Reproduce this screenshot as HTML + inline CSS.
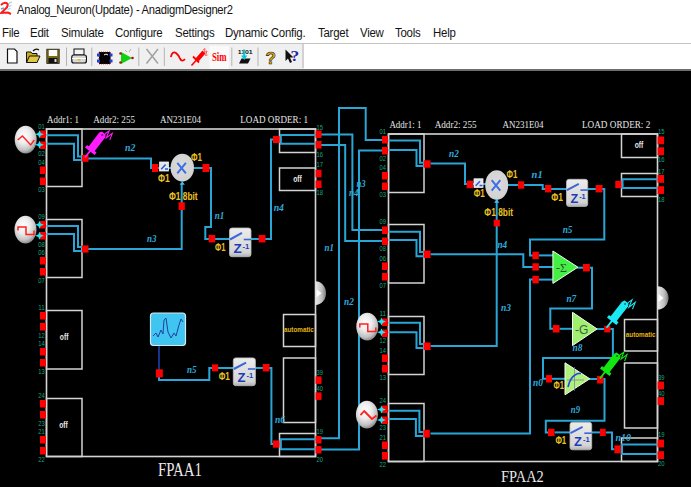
<!DOCTYPE html>
<html><head><meta charset="utf-8"><style>
html,body{margin:0;padding:0;width:691px;height:487px;overflow:hidden;background:#000;}
#top{position:absolute;left:0;top:0;width:691px;height:71px;background:#fff;}
#title{position:absolute;left:0;top:0;width:691px;height:22px;}
.tt{position:absolute;left:16.8px;top:2.3px;font-family:"Liberation Sans",sans-serif;font-size:13px;color:#141414;letter-spacing:-0.3px;white-space:nowrap;transform:scaleX(0.862);transform-origin:0 0;}
#menu{position:absolute;left:0;top:22px;width:691px;height:20px;}
#menu span{position:absolute;top:3.6px;font-family:"Liberation Sans",sans-serif;font-size:12.3px;color:#141414;white-space:nowrap;letter-spacing:-0.25px;transform:scaleX(0.93);transform-origin:0 0;}
#sep{position:absolute;left:0;top:42.5px;width:691px;height:1px;background:#c4c4c4;}
#tb{position:absolute;left:0;top:43px;width:304px;height:26px;background:#f0f0f0;}
#tbl{position:absolute;left:0;top:68.8px;width:691px;height:2.2px;background:#6e6e6e;}
</style></head><body>
<div id="top">
<div id="title"><span class="ico"></span><span class="tt">Analog_Neuron(Update) - AnadigmDesigner2</span></div>
<div id="menu">
<span style="left:2px">File</span><span style="left:30px">Edit</span><span style="left:61px">Simulate</span><span style="left:115px">Configure</span><span style="left:175px">Settings</span><span style="left:225px">Dynamic Config.</span><span style="left:317.5px">Target</span><span style="left:360px">View</span><span style="left:395px">Tools</span><span style="left:432.5px">Help</span>
</div>
<div id="tb"></div>
<div id="sep"></div><div id="tbl"></div><svg width="691" height="71" style="position:absolute;left:0;top:0">
<!-- title icon -->
<path d="M1,5 Q4.5,1.2 7.5,3.8 Q8.5,6.5 5,9.2 L1.2,13 L8,12.6 L11,14" fill="none" stroke="#ff1a1a" stroke-width="2"/>
<path d="M8.5,3.5 L12,2 M8.5,6.5 L11.5,5.5 M7.5,9.5 L10.5,8.5" stroke="#70c8e8" stroke-width="0.9"/>
<path d="M1,9 L4,8" stroke="#50b0d0" stroke-width="1.5"/>
<!-- separators -->
<g stroke="#b4b4b4" stroke-width="1">
<line x1="66.5" y1="47.5" x2="66.5" y2="66"/><line x1="91.8" y1="47.5" x2="91.8" y2="66"/>
<line x1="138.8" y1="47.5" x2="138.8" y2="66"/><line x1="164.3" y1="47.5" x2="164.3" y2="66"/>
<line x1="231.8" y1="47.5" x2="231.8" y2="66"/><line x1="258" y1="47.5" x2="258" y2="66"/>
<line x1="303" y1="44" x2="303" y2="68"/>
</g>
<!-- new doc -->
<path d="M7.5,49 L14.5,49 L17,51.5 L17,63 L7.5,63 Z" fill="#fff" stroke="#111" stroke-width="1.2"/>
<!-- open -->
<path d="M26.5,52 L31,52 L32,53.5 L37,53.5 L37,62.5 L26.5,62.5 Z" fill="#c8b020" stroke="#111" stroke-width="1"/>
<path d="M26.5,62.5 L29.5,56 L40,56 L37,62.5 Z" fill="#e0c840" stroke="#111" stroke-width="1"/>
<path d="M33,51 Q36,48 39,50" fill="none" stroke="#111" stroke-width="1.2"/>
<!-- save -->
<rect x="46.8" y="49.2" width="12.4" height="14.3" fill="#7a6a10" stroke="#222" stroke-width="0.8"/>
<rect x="48.8" y="50" width="8.4" height="6" fill="#fff"/>
<rect x="48.5" y="58" width="9" height="5" fill="#111"/>
<rect x="54.5" y="59" width="2" height="3" fill="#ddd"/>
<!-- printer -->
<rect x="74" y="49" width="10" height="6" fill="#f4f4f4" stroke="#111" stroke-width="1"/>
<rect x="71.8" y="55" width="14.6" height="8" rx="2" fill="#d8d8d8" stroke="#111" stroke-width="1.2"/>
<line x1="72" y1="58.5" x2="86" y2="58.5" stroke="#fff" stroke-width="1"/>
<rect x="77.5" y="59" width="3" height="1.5" fill="#e0c000"/>
<!-- chip -->
<rect x="99" y="52" width="11.5" height="12" fill="#000" stroke="#c01010" stroke-width="0.7" stroke-dasharray="1,1"/>
<rect x="97" y="53.5" width="3" height="3" fill="#2040d0"/><rect x="97" y="59.5" width="3" height="3" fill="#2040d0"/>
<rect x="109.5" y="53.5" width="3" height="3" fill="#2040d0"/><rect x="109.5" y="59.5" width="3" height="3" fill="#2040d0"/>
<path d="M104,55 Q106,53 108,55" fill="none" stroke="#fff" stroke-width="1"/>
<!-- green tri -->
<polygon points="121,52 132,58 121,64" fill="#10d010"/>
<circle cx="120.5" cy="53.5" r="1.3" fill="#b01010"/><circle cx="120.5" cy="62.5" r="1.3" fill="#b01010"/><circle cx="132.5" cy="58" r="1.3" fill="#b01010"/>
<path d="M125,50 L127,52 M131,49 L129,52" stroke="#888" stroke-width="0.6"/>
<!-- X -->
<path d="M146.5,49 L158,63.5 M158,49 L146.5,63.5" stroke="#a0a0a0" stroke-width="1.5"/>
<!-- sine -->
<path d="M170.8,57 Q172.5,50.5 176,53 Q178.5,55 180,58.5 Q182,62.5 185,59" fill="none" stroke="#f00" stroke-width="1.8"/>
<!-- red probe -->
<path d="M191.5,65.5 L197,59.5" stroke="#f00" stroke-width="1.6"/>
<polygon points="195.5,58.5 202.5,50.5 205.5,53.5 198.5,61.5" fill="#f00"/>
<path d="M193,56.5 L199,62.5" stroke="#f00" stroke-width="1.8"/>
<path d="M203,50 L205,48.5 L204.5,52.5 L207,51 L205.5,55.5 L207.5,55" fill="none" stroke="#f44" stroke-width="0.9"/>
<!-- Sim button -->
<rect x="209.5" y="46" width="19.5" height="23" fill="#fafafa"/>
<text x="212" y="60.5" font-family="Liberation Serif" font-size="11.5" font-weight="bold" fill="#f00" textLength="14.6" lengthAdjust="spacingAndGlyphs">Sim</text>
<!-- download -->
<text x="237.7" y="53.8" font-family="Liberation Sans" font-size="5.5" font-weight="bold" fill="#111" textLength="15" lengthAdjust="spacingAndGlyphs">1101</text>
<path d="M239,63.5 L241.5,58.5 L250.5,58.5 L248,63.5 Z" fill="#111"/>
<rect x="243.2" y="49.5" width="2" height="7" fill="#00c8e0"/>
<polygon points="241,55.5 247.4,55.5 244.2,60" fill="#00c8e0"/>
<!-- yellow ? -->
<text x="265.5" y="63.5" font-family="Liberation Sans" font-size="17" font-weight="bold" fill="#e8b000" stroke="#222" stroke-width="0.6" textLength="10.5" lengthAdjust="spacingAndGlyphs">?</text>
<!-- pointer ? -->
<path d="M285.5,49.5 L285.5,61 L288,58.5 L290,63 L292,62 L290,57.5 L293.5,57.5 Z" fill="#111"/>
<text x="290.5" y="61" font-family="Liberation Serif" font-size="15" font-weight="bold" fill="#1a2aa0" textLength="8.7" lengthAdjust="spacingAndGlyphs">?</text>
</svg>
</div>
<svg width="691" height="416" viewBox="0 71 691 416" style="position:absolute;left:0;top:71px"><defs>
<radialGradient id="sph" cx="0.42" cy="0.36" r="0.72">
<stop offset="0" stop-color="#ffffff"/><stop offset="0.4" stop-color="#ececec"/><stop offset="0.72" stop-color="#c2c2c2"/><stop offset="1" stop-color="#6c6c6c"/></radialGradient>
<radialGradient id="mul" cx="0.5" cy="0.45" r="0.6">
<stop offset="0" stop-color="#dcdcdc"/><stop offset="0.85" stop-color="#d2d2d2"/><stop offset="1" stop-color="#b4b4b4"/></radialGradient>
<linearGradient id="zg" x1="0" y1="0" x2="0" y2="1">
<stop offset="0" stop-color="#ececec"/><stop offset="0.85" stop-color="#d4d4d4"/><stop offset="1" stop-color="#b0b0b0"/></linearGradient>
<linearGradient id="half" x1="0" y1="0" x2="1" y2="0">
<stop offset="0" stop-color="#e8e8e8"/><stop offset="0.6" stop-color="#c0c0c0"/><stop offset="1" stop-color="#7a7a7a"/></linearGradient>
</defs>
<rect x="46.5" y="129.0" width="269.0" height="327.5" fill="none" stroke="#d4d4d4" stroke-width="1.6" />
<rect x="46.5" y="129.0" width="35.5" height="57.5" fill="none" stroke="#d4d4d4" stroke-width="1.5" />
<rect x="46.5" y="219.5" width="35.5" height="58.0" fill="none" stroke="#d4d4d4" stroke-width="1.5" />
<rect x="46.5" y="310.5" width="35.5" height="58.5" fill="none" stroke="#d4d4d4" stroke-width="1.5" />
<rect x="46.5" y="398.5" width="35.5" height="58.0" fill="none" stroke="#d4d4d4" stroke-width="1.5" />
<rect x="279.5" y="129.0" width="36.0" height="23.5" fill="none" stroke="#d4d4d4" stroke-width="1.5" />
<rect x="279.5" y="168.0" width="36.0" height="22.5" fill="none" stroke="#d4d4d4" stroke-width="1.5" />
<rect x="283.5" y="314.5" width="32.0" height="32.0" fill="none" stroke="#d4d4d4" stroke-width="1.5" />
<rect x="283.5" y="358.0" width="32.0" height="64.5" fill="none" stroke="#d4d4d4" stroke-width="1.5" />
<rect x="279.5" y="433.5" width="36.0" height="23.0" fill="none" stroke="#d4d4d4" stroke-width="1.5" />
<rect x="388.5" y="134.0" width="269.0" height="327.5" fill="none" stroke="#d4d4d4" stroke-width="1.6" />
<rect x="388.5" y="134.0" width="35.5" height="58.5" fill="none" stroke="#d4d4d4" stroke-width="1.5" />
<rect x="388.5" y="224.5" width="35.5" height="58.5" fill="none" stroke="#d4d4d4" stroke-width="1.5" />
<rect x="388.5" y="316.5" width="35.5" height="58.0" fill="none" stroke="#d4d4d4" stroke-width="1.5" />
<rect x="388.5" y="403.5" width="35.5" height="58.0" fill="none" stroke="#d4d4d4" stroke-width="1.5" />
<rect x="621.5" y="134.0" width="36.0" height="23.5" fill="none" stroke="#d4d4d4" stroke-width="1.5" />
<rect x="621.5" y="173.5" width="36.0" height="23.0" fill="none" stroke="#d4d4d4" stroke-width="1.5" />
<rect x="624.5" y="319.5" width="33.0" height="31.5" fill="none" stroke="#d4d4d4" stroke-width="1.5" />
<rect x="624.5" y="363.0" width="33.0" height="65.0" fill="none" stroke="#d4d4d4" stroke-width="1.5" />
<rect x="621.5" y="438.0" width="36.0" height="23.5" fill="none" stroke="#d4d4d4" stroke-width="1.5" />
<polyline points="46.5,135.3 78.0,135.3 78.0,156.5 84.0,156.5" fill="none" stroke="#2aa6d6" stroke-width="2"/>
<polyline points="46.5,143.7 74.0,143.7 74.0,160.0 84.0,160.0" fill="none" stroke="#2aa6d6" stroke-width="2"/>
<polyline points="46.5,226.0 78.0,226.0 78.0,247.0 84.0,247.0" fill="none" stroke="#2aa6d6" stroke-width="2"/>
<polyline points="46.5,234.1 74.0,234.1 74.0,251.0 84.0,251.0" fill="none" stroke="#2aa6d6" stroke-width="2"/>
<polyline points="88.0,158.5 151.0,158.5 151.0,168.0 153.0,168.0" fill="none" stroke="#2aa6d6" stroke-width="2"/>
<polyline points="158.0,168.0 172.0,168.0" fill="none" stroke="#2aa6d6" stroke-width="2"/>
<polyline points="194.0,168.0 203.0,168.0" fill="none" stroke="#2aa6d6" stroke-width="2"/>
<polyline points="209.0,168.0 211.0,168.0 211.0,227.0 205.3,227.0 205.3,239.0 209.0,239.0" fill="none" stroke="#2aa6d6" stroke-width="2"/>
<polyline points="215.0,239.0 230.0,239.0" fill="none" stroke="#2aa6d6" stroke-width="2"/>
<polyline points="251.0,239.0 259.0,239.0" fill="none" stroke="#2aa6d6" stroke-width="2"/>
<polyline points="265.0,239.0 271.0,239.0 271.0,139.5 274.0,139.5" fill="none" stroke="#2aa6d6" stroke-width="2"/>
<polyline points="279.5,139.5 280.8,139.5 280.8,135.0 315.5,135.0" fill="none" stroke="#2aa6d6" stroke-width="2"/>
<polyline points="280.8,139.5 280.8,143.7 315.5,143.7" fill="none" stroke="#2aa6d6" stroke-width="2"/>
<polyline points="88.0,249.0 181.7,249.0 181.7,183.0" fill="none" stroke="#2aa6d6" stroke-width="2"/>
<polyline points="159.0,345.0 159.0,370.0" fill="none" stroke="#1a3a9a" stroke-width="1.8"/>
<polyline points="159.0,377.0 159.0,380.0 209.3,380.0 209.3,368.0 213.0,368.0" fill="none" stroke="#2aa6d6" stroke-width="2"/>
<polyline points="218.0,368.0 234.0,368.0" fill="none" stroke="#2aa6d6" stroke-width="2"/>
<polyline points="255.0,368.0 263.0,368.0" fill="none" stroke="#2aa6d6" stroke-width="2"/>
<polyline points="269.0,368.0 271.4,368.0 271.4,444.0 273.0,444.0" fill="none" stroke="#2aa6d6" stroke-width="2"/>
<polyline points="279.5,444.0 280.8,444.0 280.8,439.3 315.5,439.3" fill="none" stroke="#2aa6d6" stroke-width="2"/>
<polyline points="280.8,444.0 280.8,449.2 315.5,449.2" fill="none" stroke="#2aa6d6" stroke-width="2"/>
<polyline points="321.0,134.5 352.4,134.5 352.4,230.0 382.0,230.0" fill="none" stroke="#2aa6d6" stroke-width="2"/>
<polyline points="321.0,145.0 345.2,145.0 345.2,241.0 382.0,241.0" fill="none" stroke="#2aa6d6" stroke-width="2"/>
<polyline points="321.0,438.3 339.0,438.3 339.0,108.0 365.7,108.0 365.7,140.0 382.0,140.0" fill="none" stroke="#2aa6d6" stroke-width="2"/>
<polyline points="321.0,449.6 359.0,449.6 359.0,150.6 382.0,150.6" fill="none" stroke="#2aa6d6" stroke-width="2"/>
<polyline points="388.5,140.6 420.0,140.6 420.0,162.8 424.0,162.8" fill="none" stroke="#2aa6d6" stroke-width="2"/>
<polyline points="388.5,150.0 416.5,150.0 416.5,166.0 424.0,166.0" fill="none" stroke="#2aa6d6" stroke-width="2"/>
<polyline points="388.5,231.7 420.0,231.7 420.0,251.9 424.0,251.9" fill="none" stroke="#2aa6d6" stroke-width="2"/>
<polyline points="388.5,240.0 416.5,240.0 416.5,256.3 424.0,256.3" fill="none" stroke="#2aa6d6" stroke-width="2"/>
<polyline points="388.5,322.8 420.0,322.8 420.0,344.0 424.0,344.0" fill="none" stroke="#2aa6d6" stroke-width="2"/>
<polyline points="388.5,332.2 416.5,332.2 416.5,348.0 424.0,348.0" fill="none" stroke="#2aa6d6" stroke-width="2"/>
<polyline points="388.5,410.8 419.4,410.8 419.4,432.0 424.0,432.0" fill="none" stroke="#2aa6d6" stroke-width="2"/>
<polyline points="388.5,419.0 415.9,419.0 415.9,436.0 424.0,436.0" fill="none" stroke="#2aa6d6" stroke-width="2"/>
<polyline points="430.5,163.5 465.0,163.5 465.0,184.0 467.0,184.0" fill="none" stroke="#2aa6d6" stroke-width="2"/>
<polyline points="473.0,184.0 486.0,184.0" fill="none" stroke="#2aa6d6" stroke-width="2"/>
<polyline points="508.0,185.0 518.0,185.0" fill="none" stroke="#2aa6d6" stroke-width="2"/>
<polyline points="524.0,185.0 542.7,185.0 542.7,189.0 545.0,189.0" fill="none" stroke="#2aa6d6" stroke-width="2"/>
<polyline points="551.0,189.0 567.0,189.0" fill="none" stroke="#2aa6d6" stroke-width="2"/>
<polyline points="588.0,189.0 596.0,189.0" fill="none" stroke="#2aa6d6" stroke-width="2"/>
<polyline points="602.0,189.0 604.3,189.0 604.3,239.4 530.0,239.4 530.0,255.4 533.0,255.4" fill="none" stroke="#2aa6d6" stroke-width="2"/>
<polyline points="430.5,254.3 523.3,254.3 523.3,267.0 533.0,267.0" fill="none" stroke="#2aa6d6" stroke-width="2"/>
<polyline points="496.7,199.0 496.7,346.0 430.5,346.0" fill="none" stroke="#2aa6d6" stroke-width="2"/>
<polyline points="430.5,433.5 530.0,433.5 530.0,279.6 533.0,279.6" fill="none" stroke="#2aa6d6" stroke-width="2"/>
<polyline points="538.8,255.4 553.0,255.4" fill="none" stroke="#2aa6d6" stroke-width="2"/>
<polyline points="538.8,267.0 553.0,267.0" fill="none" stroke="#2aa6d6" stroke-width="2"/>
<polyline points="538.8,279.6 553.0,279.6" fill="none" stroke="#2aa6d6" stroke-width="2"/>
<polyline points="577.0,267.7 583.0,267.7" fill="none" stroke="#2aa6d6" stroke-width="2"/>
<polyline points="589.8,267.7 592.0,267.7 592.0,308.4 550.3,308.4 550.3,328.8 553.0,328.8" fill="none" stroke="#2aa6d6" stroke-width="2"/>
<polyline points="559.5,328.8 573.0,328.8" fill="none" stroke="#2aa6d6" stroke-width="2"/>
<polyline points="597.0,329.0 604.3,329.0" fill="none" stroke="#2aa6d6" stroke-width="2"/>
<polyline points="610.4,329.0 612.9,329.0 612.9,357.9 543.0,357.9 543.0,378.8 546.0,378.8" fill="none" stroke="#2aa6d6" stroke-width="2"/>
<polyline points="552.0,378.8 565.0,378.8" fill="none" stroke="#2aa6d6" stroke-width="2"/>
<polyline points="589.0,379.0 597.0,379.0" fill="none" stroke="#2aa6d6" stroke-width="2"/>
<polyline points="603.3,379.0 604.5,379.0 604.5,420.7 545.8,420.7 545.8,432.4 548.0,432.4" fill="none" stroke="#2aa6d6" stroke-width="2"/>
<polyline points="554.5,432.4 570.0,432.4" fill="none" stroke="#2aa6d6" stroke-width="2"/>
<polyline points="591.7,432.4 600.0,432.4" fill="none" stroke="#2aa6d6" stroke-width="2"/>
<polyline points="605.7,432.4 612.0,432.4 612.0,449.2 614.4,449.2" fill="none" stroke="#2aa6d6" stroke-width="2"/>
<polyline points="620.8,449.2 622.0,449.2 622.0,444.5 657.5,444.5" fill="none" stroke="#2aa6d6" stroke-width="2"/>
<polyline points="622.0,449.2 622.0,454.1 657.5,454.1" fill="none" stroke="#2aa6d6" stroke-width="2"/>
<polyline points="621.5,184.5 622.5,184.5 622.5,179.3 657.5,179.3" fill="none" stroke="#2aa6d6" stroke-width="2"/>
<polyline points="622.5,184.5 622.5,188.0 657.5,188.0" fill="none" stroke="#2aa6d6" stroke-width="2"/>
<rect x="40.0" y="130.5" width="6.0" height="7.5" fill="#ff0000" />
<rect x="40.0" y="141.5" width="6.0" height="7.5" fill="#ff0000" />
<rect x="40.0" y="166.5" width="6.0" height="7.5" fill="#ff0000" />
<rect x="40.0" y="177.5" width="6.0" height="7.5" fill="#ff0000" />
<rect x="40.0" y="221.0" width="6.0" height="7.5" fill="#ff0000" />
<rect x="40.0" y="232.0" width="6.0" height="7.5" fill="#ff0000" />
<rect x="40.0" y="257.0" width="6.0" height="7.5" fill="#ff0000" />
<rect x="40.0" y="268.0" width="6.0" height="7.5" fill="#ff0000" />
<rect x="40.0" y="312.0" width="6.0" height="7.5" fill="#ff0000" />
<rect x="40.0" y="323.0" width="6.0" height="7.5" fill="#ff0000" />
<rect x="40.0" y="348.0" width="6.0" height="7.5" fill="#ff0000" />
<rect x="40.0" y="359.0" width="6.0" height="7.5" fill="#ff0000" />
<rect x="40.0" y="400.0" width="6.0" height="7.5" fill="#ff0000" />
<rect x="40.0" y="411.0" width="6.0" height="7.5" fill="#ff0000" />
<rect x="40.0" y="436.0" width="6.0" height="7.5" fill="#ff0000" />
<rect x="40.0" y="447.0" width="6.0" height="7.5" fill="#ff0000" />
<rect x="382.0" y="136.0" width="6.0" height="7.5" fill="#ff0000" />
<rect x="382.0" y="147.0" width="6.0" height="7.5" fill="#ff0000" />
<rect x="382.0" y="172.0" width="6.0" height="7.5" fill="#ff0000" />
<rect x="382.0" y="182.5" width="6.0" height="7.5" fill="#ff0000" />
<rect x="382.0" y="226.5" width="6.0" height="7.5" fill="#ff0000" />
<rect x="382.0" y="237.5" width="6.0" height="7.5" fill="#ff0000" />
<rect x="382.0" y="262.5" width="6.0" height="7.5" fill="#ff0000" />
<rect x="382.0" y="273.0" width="6.0" height="7.5" fill="#ff0000" />
<rect x="382.0" y="318.5" width="6.0" height="7.5" fill="#ff0000" />
<rect x="382.0" y="329.5" width="6.0" height="7.5" fill="#ff0000" />
<rect x="382.0" y="354.5" width="6.0" height="7.5" fill="#ff0000" />
<rect x="382.0" y="365.0" width="6.0" height="7.5" fill="#ff0000" />
<rect x="382.0" y="405.5" width="6.0" height="7.5" fill="#ff0000" />
<rect x="382.0" y="416.5" width="6.0" height="7.5" fill="#ff0000" />
<rect x="382.0" y="441.5" width="6.0" height="7.5" fill="#ff0000" />
<rect x="382.0" y="452.0" width="6.0" height="7.5" fill="#ff0000" />
<rect x="315.5" y="130.5" width="6.0" height="7.5" fill="#ff0000" />
<rect x="315.5" y="141.0" width="6.0" height="7.5" fill="#ff0000" />
<rect x="315.5" y="169.8" width="6.0" height="7.5" fill="#ff0000" />
<rect x="315.5" y="180.5" width="6.0" height="7.5" fill="#ff0000" />
<rect x="315.5" y="376.4" width="6.0" height="7.5" fill="#ff0000" />
<rect x="315.5" y="392.4" width="6.0" height="7.5" fill="#ff0000" />
<rect x="315.5" y="436.0" width="6.0" height="7.5" fill="#ff0000" />
<rect x="315.5" y="446.0" width="6.0" height="7.5" fill="#ff0000" />
<rect x="657.5" y="136.5" width="6.5" height="7.8" fill="#ff0000" />
<rect x="657.5" y="147.3" width="6.5" height="7.8" fill="#ff0000" />
<rect x="657.5" y="175.0" width="6.5" height="7.8" fill="#ff0000" />
<rect x="657.5" y="186.2" width="6.5" height="7.8" fill="#ff0000" />
<rect x="657.5" y="381.6" width="6.5" height="7.8" fill="#ff0000" />
<rect x="657.5" y="397.1" width="6.5" height="7.8" fill="#ff0000" />
<rect x="657.5" y="439.6" width="6.5" height="7.8" fill="#ff0000" />
<rect x="657.5" y="451.2" width="6.5" height="7.8" fill="#ff0000" />
<rect x="82.0" y="155.0" width="6.5" height="6.8" fill="#ff0000" />
<rect x="82.0" y="245.4" width="6.5" height="7.2" fill="#ff0000" />
<rect x="152.0" y="164.0" width="6.3" height="8.0" fill="#ff0000" />
<rect x="202.5" y="164.0" width="6.9" height="8.0" fill="#ff0000" />
<rect x="178.6" y="202.3" width="6.2" height="7.7" fill="#ff0000" />
<rect x="208.6" y="235.0" width="6.6" height="7.4" fill="#ff0000" />
<rect x="258.7" y="235.0" width="6.8" height="7.4" fill="#ff0000" />
<rect x="273.0" y="136.0" width="6.7" height="7.0" fill="#ff0000" />
<rect x="155.9" y="369.3" width="6.9" height="8.1" fill="#ff0000" />
<rect x="212.0" y="364.4" width="6.2" height="6.9" fill="#ff0000" />
<rect x="262.8" y="364.0" width="6.7" height="7.4" fill="#ff0000" />
<rect x="272.9" y="440.4" width="6.6" height="7.3" fill="#ff0000" />
<rect x="423.8" y="160.3" width="6.7" height="7.4" fill="#ff0000" />
<rect x="466.7" y="180.8" width="6.3" height="7.4" fill="#ff0000" />
<rect x="518.0" y="181.3" width="6.2" height="7.4" fill="#ff0000" />
<rect x="545.0" y="185.0" width="6.3" height="7.4" fill="#ff0000" />
<rect x="595.6" y="185.0" width="6.9" height="7.4" fill="#ff0000" />
<rect x="615.3" y="180.8" width="6.2" height="7.4" fill="#ff0000" />
<rect x="493.7" y="219.7" width="6.2" height="6.7" fill="#ff0000" />
<rect x="532.4" y="251.7" width="6.4" height="7.4" fill="#ff0000" />
<rect x="532.4" y="263.3" width="6.4" height="7.3" fill="#ff0000" />
<rect x="532.4" y="275.9" width="6.4" height="7.4" fill="#ff0000" />
<rect x="583.0" y="264.0" width="6.8" height="7.4" fill="#ff0000" />
<rect x="552.8" y="325.1" width="6.7" height="7.4" fill="#ff0000" />
<rect x="604.3" y="325.7" width="6.1" height="6.7" fill="#ff0000" />
<rect x="546.0" y="375.1" width="6.0" height="7.4" fill="#ff0000" />
<rect x="597.1" y="375.9" width="6.2" height="7.6" fill="#ff0000" />
<rect x="548.0" y="428.8" width="6.5" height="7.3" fill="#ff0000" />
<rect x="599.9" y="428.8" width="5.8" height="7.2" fill="#ff0000" />
<rect x="614.4" y="445.4" width="6.4" height="7.9" fill="#ff0000" />
<rect x="423.8" y="250.6" width="6.7" height="7.4" fill="#ff0000" />
<rect x="423.8" y="342.5" width="6.7" height="7.5" fill="#ff0000" />
<rect x="423.5" y="429.8" width="6.3" height="7.7" fill="#ff0000" />
<ellipse cx="25.7" cy="139.6" rx="11" ry="13.9" fill="url(#sph)"/>
<polyline points="17.7,140.0 22.4,136.0 30.7,145.0 34.3,140.0" fill="none" stroke="#ff2020" stroke-width="1.4"/>
<polygon points="35.0,134.2 38.3,132.89999999999998 39.5,130.2 40.7,132.89999999999998 44.0,134.2 40.7,135.5 39.5,138.2 38.3,135.5" fill="#22e6f4"/>
<polygon points="35.0,144.7 38.3,143.39999999999998 39.5,140.7 40.7,143.39999999999998 44.0,144.7 40.7,146.0 39.5,148.7 38.3,146.0" fill="#22e6f4"/>
<ellipse cx="25.5" cy="229.6" rx="11" ry="13.9" fill="url(#sph)"/>
<polyline points="18.0,230.6 18.0,227.0 26.0,227.0 26.0,234.4 34.0,234.4 34.0,230.6" fill="none" stroke="#ff2020" stroke-width="1.5"/>
<polygon points="35.0,224.7 38.3,223.39999999999998 39.5,220.7 40.7,223.39999999999998 44.0,224.7 40.7,226.0 39.5,228.7 38.3,226.0" fill="#22e6f4"/>
<polygon points="35.0,235.7 38.3,234.39999999999998 39.5,231.7 40.7,234.39999999999998 44.0,235.7 40.7,237.0 39.5,239.7 38.3,237.0" fill="#22e6f4"/>
<ellipse cx="367.3" cy="326.6" rx="11" ry="13.9" fill="url(#sph)"/>
<polyline points="359.8,327.6 359.8,324.0 367.8,324.0 367.8,331.40000000000003 375.8,331.40000000000003 375.8,327.6" fill="none" stroke="#ff2020" stroke-width="1.5"/>
<polygon points="377.0,321.6 380.3,320.3 381.5,317.6 382.7,320.3 386.0,321.6 382.7,322.90000000000003 381.5,325.6 380.3,322.90000000000003" fill="#22e6f4"/>
<polygon points="377.0,332.2 380.3,330.9 381.5,328.2 382.7,330.9 386.0,332.2 382.7,333.5 381.5,336.2 380.3,333.5" fill="#22e6f4"/>
<ellipse cx="366.9" cy="414.6" rx="11" ry="13.9" fill="url(#sph)"/>
<polyline points="360.4,415.1 364.2,411.0 372.0,419.0 376.5,415.5" fill="none" stroke="#ff2020" stroke-width="1.8" stroke-linejoin="round"/>
<polygon points="377.0,409.5 380.3,408.2 381.5,405.5 382.7,408.2 386.0,409.5 382.7,410.8 381.5,413.5 380.3,410.8" fill="#22e6f4"/>
<polygon points="377.0,420 380.3,418.7 381.5,416 382.7,418.7 386.0,420 382.7,421.3 381.5,424 380.3,421.3" fill="#22e6f4"/>
<rect x="159.6" y="162" width="8.900000000000006" height="9" fill="#e4e6ee" stroke="#f4f4f4" stroke-width="0.8"/>
<path d="M161.2,169.3 L165.6,164.5 M165.0,169.1 L168.0,169.1" fill="none" stroke="#2a5ad0" stroke-width="1.5"/>
<rect x="474" y="178.8" width="9" height="8.599999999999994" fill="#e4e6ee" stroke="#f4f4f4" stroke-width="0.8"/>
<path d="M475.6,185.70000000000002 L480,181.3 M479.5,185.5 L482.5,185.5" fill="none" stroke="#2a5ad0" stroke-width="1.5"/>
<ellipse cx="182.3" cy="167.7" rx="11.7" ry="14" fill="url(#mul)"/>
<path d="M177.3,162.89999999999998 L185.9,173.29999999999998 M185.9,162.89999999999998 L177.3,173.29999999999998" stroke="#3c6ee6" stroke-width="2"/>
<polygon points="179.70000000000002,184.7 184.9,184.7 182.3,181.2" fill="#40c0f0"/>
<ellipse cx="496.7" cy="185" rx="11.5" ry="14.8" fill="url(#mul)"/>
<path d="M491.7,180.2 L500.3,190.6 M500.3,180.2 L491.7,190.6" stroke="#3c6ee6" stroke-width="2"/>
<polygon points="494.09999999999997,202.8 499.3,202.8 496.7,199.3" fill="#40c0f0"/>
<rect x="229.5" y="228" width="21.5" height="28.69999999999999" rx="2.5" fill="url(#zg)" stroke="#bcbcbc" stroke-width="0.8"/>
<path d="M230.0,239.5 L242.0,232.9" stroke="#3a66d8" stroke-width="2" fill="none"/>
<path d="M243.7,239.5 L251,239.5" stroke="#3a66d8" stroke-width="1.6" fill="none"/>
<text x="233.6" y="253.0" font-family="Liberation Sans" font-weight="bold" font-size="13.5" fill="#1a3cb8">Z</text>
<text x="242.4" y="248.7" font-family="Liberation Sans" font-weight="bold" font-size="7.7" fill="#1a3cb8">-1</text>
<rect x="233.3" y="357.9" width="22.099999999999994" height="27.80000000000001" rx="2.5" fill="url(#zg)" stroke="#bcbcbc" stroke-width="0.8"/>
<path d="M233.8,369.0 L246.1,362.6" stroke="#3a66d8" stroke-width="2" fill="none"/>
<path d="M247.9,369.0 L255.4,369.0" stroke="#3a66d8" stroke-width="1.6" fill="none"/>
<text x="237.5" y="382.1" font-family="Liberation Sans" font-weight="bold" font-size="13.1" fill="#1a3cb8">Z</text>
<text x="246.6" y="377.9" font-family="Liberation Sans" font-weight="bold" font-size="7.5" fill="#1a3cb8">-1</text>
<rect x="566.5" y="179.3" width="21.200000000000045" height="27.099999999999994" rx="2.5" fill="url(#zg)" stroke="#bcbcbc" stroke-width="0.8"/>
<path d="M567.0,190.1 L578.8,183.9" stroke="#3a66d8" stroke-width="2" fill="none"/>
<path d="M580.5,190.1 L587.7,190.1" stroke="#3a66d8" stroke-width="1.6" fill="none"/>
<text x="570.5" y="202.9" font-family="Liberation Sans" font-weight="bold" font-size="12.7" fill="#1a3cb8">Z</text>
<text x="579.2" y="198.8" font-family="Liberation Sans" font-weight="bold" font-size="7.3" fill="#1a3cb8">-1</text>
<rect x="570" y="422.2" width="21.700000000000045" height="27.600000000000023" rx="2.5" fill="url(#zg)" stroke="#bcbcbc" stroke-width="0.8"/>
<path d="M570.5,433.2 L582.6,426.9" stroke="#3a66d8" stroke-width="2" fill="none"/>
<path d="M584.3,433.2 L591.7,433.2" stroke="#3a66d8" stroke-width="1.6" fill="none"/>
<text x="574.1" y="446.2" font-family="Liberation Sans" font-weight="bold" font-size="13.0" fill="#1a3cb8">Z</text>
<text x="583.0" y="442.1" font-family="Liberation Sans" font-weight="bold" font-size="7.5" fill="#1a3cb8">-1</text>
<polygon points="552.9,251 577.9,267.2 552.9,283.4" fill="#44f044" stroke="#f0fff0" stroke-width="1"/>
<text x="556" y="272" font-family="Liberation Serif" font-size="12" fill="#305030">-Σ</text>
<polygon points="572.5,312.3 597.1,328.95000000000005 572.5,345.6" fill="#a0f070" stroke="#f4fff0" stroke-width="1"/>
<text x="575" y="333.5" font-family="Liberation Sans" font-size="12" fill="#406040">-G</text>
<polygon points="565,362.8 589.8,378.8 565,394.8" fill="#b0f07c" stroke="#f4fff0" stroke-width="1"/>
<path d="M574.5,367 L574.5,391 M567,380 L584,380" stroke="#70809a" stroke-width="0.7"/><path d="M568,387 Q570,378 575,375 Q578,373 581,373.5" fill="none" stroke="#2848e0" stroke-width="1.6"/>
<line x1="85.0" y1="157.5" x2="90.8" y2="150.0" stroke="#ff1cff" stroke-width="1.8"/>
<polygon points="85.0,147.6 94.6,154.9 96.5,152.4 87.0,145.1" fill="#ff1cff"/>
<polygon points="87.7,147.7 99.3,132.6 101.9,131.4 105.7,134.4 105.3,137.2 93.8,152.3" fill="#ff1cff"/>
<circle cx="102.3" cy="134.9" r="1" fill="#000" opacity="0.5"/>
<polyline points="105.0,133.8 109.1,131.0 106.3,137.9 112.3,133.4 109.8,139.9" fill="none" stroke="#ff1cff" stroke-width="1.1"/>
<line x1="606.6" y1="327.8" x2="612.7" y2="319.9" stroke="#1ce8f4" stroke-width="1.8"/>
<polygon points="607.0,317.5 616.4,324.9 618.5,322.3 609.0,314.9" fill="#1ce8f4"/>
<polygon points="609.7,317.6 622.0,301.8 624.7,300.6 628.5,303.5 628.0,306.5 615.7,322.2" fill="#1ce8f4"/>
<circle cx="625.0" cy="304.1" r="1" fill="#000" opacity="0.5"/>
<polyline points="627.8,302.9 632.0,299.9 628.9,307.2 635.2,302.4 632.5,309.1" fill="none" stroke="#1ce8f4" stroke-width="1.1"/>
<line x1="600.0" y1="378.5" x2="605.7" y2="371.0" stroke="#10e810" stroke-width="1.8"/>
<polygon points="600.0,368.6 609.5,375.9 611.4,373.4 601.9,366.1" fill="#10e810"/>
<polygon points="602.7,368.7 614.1,353.8 616.7,352.6 620.5,355.6 620.1,358.4 608.7,373.3" fill="#10e810"/>
<circle cx="617.1" cy="356.1" r="1" fill="#000" opacity="0.5"/>
<polyline points="619.8,355.0 623.9,352.2 621.1,359.1 627.0,354.6 624.6,361.1" fill="none" stroke="#10e810" stroke-width="1.1"/>
<path d="M315.5,281.3 A10.5,11.849999999999994 0 0 1 315.5,305 Z" fill="url(#half)"/>
<polygon points="316.5,289.15 321.5,293.15 316.5,297.15" fill="#ffffff"/>
<path d="M657.5,286.2 A11,11.700000000000017 0 0 1 657.5,309.6 Z" fill="url(#half)"/>
<polygon points="658.5,293.9 663.5,297.9 658.5,301.9" fill="#ffffff"/>
<rect x="150.5" y="313" width="35" height="32.5" rx="3" fill="#40c4f0" stroke="#d8e8f0" stroke-width="1.2"/>
<polyline points="153,336 156,333 158,337 161,330 163,334 164,320 166,318 168,332 171,338 174,333 176,336 179,325 181,319 183,322" fill="none" stroke="#2040a0" stroke-width="1"/>
<text x="47" y="122.6" font-family="Liberation Serif" font-size="10.5" fill="#e4e4e4" textLength="32" lengthAdjust="spacingAndGlyphs">Addr1: 1</text>
<text x="93.3" y="122.6" font-family="Liberation Serif" font-size="10.5" fill="#e4e4e4" textLength="41.7" lengthAdjust="spacingAndGlyphs">Addr2: 255</text>
<text x="160" y="122.6" font-family="Liberation Serif" font-size="10.5" fill="#e4e4e4" textLength="41" lengthAdjust="spacingAndGlyphs">AN231E04</text>
<text x="240.3" y="122.6" font-family="Liberation Serif" font-size="10.5" fill="#e4e4e4" textLength="67.69999999999999" lengthAdjust="spacingAndGlyphs">LOAD ORDER: 1</text>
<text x="389.4" y="128.3" font-family="Liberation Serif" font-size="10.5" fill="#e4e4e4" textLength="32.0" lengthAdjust="spacingAndGlyphs">Addr1: 1</text>
<text x="434.7" y="128.3" font-family="Liberation Serif" font-size="10.5" fill="#e4e4e4" textLength="41.900000000000034" lengthAdjust="spacingAndGlyphs">Addr2: 255</text>
<text x="502.5" y="128.3" font-family="Liberation Serif" font-size="10.5" fill="#e4e4e4" textLength="40.89999999999998" lengthAdjust="spacingAndGlyphs">AN231E04</text>
<text x="582" y="128.3" font-family="Liberation Serif" font-size="10.5" fill="#e4e4e4" textLength="68.29999999999995" lengthAdjust="spacingAndGlyphs">LOAD ORDER: 2</text>
<text x="157.9" y="475.9" font-family="Liberation Serif" font-size="18" fill="#e8e8e8" textLength="44" lengthAdjust="spacingAndGlyphs">FPAA1</text>
<text x="501" y="481.7" font-family="Liberation Serif" font-size="17" fill="#e8e8e8" textLength="42.8" lengthAdjust="spacingAndGlyphs">FPAA2</text>
<text x="59.8" y="340.3" font-family="Liberation Sans" font-size="8.5" font-weight="bold" fill="#e8e8e8" textLength="8.6" lengthAdjust="spacingAndGlyphs">off</text>
<text x="59.2" y="427.8" font-family="Liberation Sans" font-size="8.5" font-weight="bold" fill="#e8e8e8" textLength="8.6" lengthAdjust="spacingAndGlyphs">off</text>
<text x="293.2" y="182.3" font-family="Liberation Sans" font-size="8.5" font-weight="bold" fill="#e8e8e8" textLength="8.6" lengthAdjust="spacingAndGlyphs">off</text>
<text x="634.7" y="148.3" font-family="Liberation Sans" font-size="8.5" font-weight="bold" fill="#e8e8e8" textLength="8.6" lengthAdjust="spacingAndGlyphs">off</text>
<text x="284.0" y="331.5" font-family="Liberation Sans" font-size="8" font-weight="bold" fill="#e4b414" textLength="29.8" lengthAdjust="spacingAndGlyphs">automatic</text>
<text x="625.8000000000001" y="336.8" font-family="Liberation Sans" font-size="8" font-weight="bold" fill="#e4b414" textLength="29.8" lengthAdjust="spacingAndGlyphs">automatic</text>
<text x="125.0" y="151.3" font-family="Liberation Serif" font-style="italic" font-weight="bold" font-size="9.5" fill="#2eaadc" textLength="10.4" lengthAdjust="spacingAndGlyphs">n2</text>
<text x="147.0" y="241.7" font-family="Liberation Serif" font-style="italic" font-weight="bold" font-size="9.5" fill="#2eaadc" textLength="9.5" lengthAdjust="spacingAndGlyphs">n3</text>
<text x="214.8" y="218.7" font-family="Liberation Serif" font-style="italic" font-weight="bold" font-size="9.5" fill="#2eaadc" textLength="9.6" lengthAdjust="spacingAndGlyphs">n1</text>
<text x="273.7" y="210.5" font-family="Liberation Serif" font-style="italic" font-weight="bold" font-size="9.5" fill="#2eaadc" textLength="10.3" lengthAdjust="spacingAndGlyphs">n4</text>
<text x="187.0" y="373.0" font-family="Liberation Serif" font-style="italic" font-weight="bold" font-size="9.5" fill="#2eaadc" textLength="9.5" lengthAdjust="spacingAndGlyphs">n5</text>
<text x="275.0" y="422.9" font-family="Liberation Serif" font-style="italic" font-weight="bold" font-size="9.5" fill="#2eaadc" textLength="10.0" lengthAdjust="spacingAndGlyphs">n6</text>
<text x="356.5" y="186.5" font-family="Liberation Serif" font-style="italic" font-weight="bold" font-size="9.5" fill="#2eaadc" textLength="9.2" lengthAdjust="spacingAndGlyphs">n3</text>
<text x="349.0" y="196.4" font-family="Liberation Serif" font-style="italic" font-weight="bold" font-size="9.5" fill="#2eaadc" textLength="9.5" lengthAdjust="spacingAndGlyphs">n4</text>
<text x="324.6" y="250.8" font-family="Liberation Serif" font-style="italic" font-weight="bold" font-size="9.5" fill="#2eaadc" textLength="9.4" lengthAdjust="spacingAndGlyphs">n1</text>
<text x="344.0" y="305.0" font-family="Liberation Serif" font-style="italic" font-weight="bold" font-size="9.5" fill="#2eaadc" textLength="9.8" lengthAdjust="spacingAndGlyphs">n2</text>
<text x="449.0" y="157.0" font-family="Liberation Serif" font-style="italic" font-weight="bold" font-size="9.5" fill="#2eaadc" textLength="9.8" lengthAdjust="spacingAndGlyphs">n2</text>
<text x="531.6" y="177.6" font-family="Liberation Serif" font-style="italic" font-weight="bold" font-size="9.5" fill="#2eaadc" textLength="11.1" lengthAdjust="spacingAndGlyphs">n1</text>
<text x="562.7" y="233.3" font-family="Liberation Serif" font-style="italic" font-weight="bold" font-size="9.5" fill="#2eaadc" textLength="9.8" lengthAdjust="spacingAndGlyphs">n5</text>
<text x="497.4" y="248.0" font-family="Liberation Serif" font-style="italic" font-weight="bold" font-size="9.5" fill="#2eaadc" textLength="9.8" lengthAdjust="spacingAndGlyphs">n4</text>
<text x="501.0" y="310.8" font-family="Liberation Serif" font-style="italic" font-weight="bold" font-size="9.5" fill="#2eaadc" textLength="10.0" lengthAdjust="spacingAndGlyphs">n3</text>
<text x="566.4" y="302.2" font-family="Liberation Serif" font-style="italic" font-weight="bold" font-size="9.5" fill="#2eaadc" textLength="9.8" lengthAdjust="spacingAndGlyphs">n7</text>
<text x="572.5" y="350.5" font-family="Liberation Serif" font-style="italic" font-weight="bold" font-size="9.5" fill="#2eaadc" textLength="9.9" lengthAdjust="spacingAndGlyphs">n8</text>
<text x="533.0" y="386.2" font-family="Liberation Serif" font-style="italic" font-weight="bold" font-size="9.5" fill="#2eaadc" textLength="10.0" lengthAdjust="spacingAndGlyphs">n0</text>
<text x="570.8" y="413.3" font-family="Liberation Serif" font-style="italic" font-weight="bold" font-size="9.5" fill="#2eaadc" textLength="9.2" lengthAdjust="spacingAndGlyphs">n9</text>
<text x="615.6" y="441.0" font-family="Liberation Serif" font-style="italic" font-weight="bold" font-size="9.5" fill="#2eaadc" textLength="15.4" lengthAdjust="spacingAndGlyphs">n10</text>
<text x="191.0" y="161.0" font-family="Liberation Sans" font-weight="bold" font-size="10" fill="#ecc224" textLength="11.0" lengthAdjust="spacingAndGlyphs">Φ1</text>
<text x="158.0" y="181.7" font-family="Liberation Sans" font-weight="bold" font-size="10" fill="#ecc224" textLength="11.7" lengthAdjust="spacingAndGlyphs">Φ1</text>
<text x="215.0" y="251.2" font-family="Liberation Sans" font-weight="bold" font-size="10" fill="#ecc224" textLength="10.4" lengthAdjust="spacingAndGlyphs">Φ1</text>
<text x="218.7" y="379.5" font-family="Liberation Sans" font-weight="bold" font-size="10" fill="#ecc224" textLength="11.1" lengthAdjust="spacingAndGlyphs">Φ1</text>
<text x="506.5" y="177.6" font-family="Liberation Sans" font-weight="bold" font-size="10" fill="#ecc224" textLength="10.8" lengthAdjust="spacingAndGlyphs">Φ1</text>
<text x="473.7" y="197.3" font-family="Liberation Sans" font-weight="bold" font-size="10" fill="#ecc224" textLength="11.1" lengthAdjust="spacingAndGlyphs">Φ1</text>
<text x="551.3" y="201.0" font-family="Liberation Sans" font-weight="bold" font-size="10" fill="#ecc224" textLength="11.7" lengthAdjust="spacingAndGlyphs">Φ1</text>
<text x="553.5" y="388.7" font-family="Liberation Sans" font-weight="bold" font-size="10" fill="#ecc224" textLength="10.5" lengthAdjust="spacingAndGlyphs">Φ1</text>
<text x="555.4" y="443.6" font-family="Liberation Sans" font-weight="bold" font-size="10" fill="#ecc224" textLength="10.8" lengthAdjust="spacingAndGlyphs">Φ1</text>
<text x="169.0" y="199.8" font-family="Liberation Sans" font-weight="bold" font-size="10" fill="#ecc224" textLength="28.6" lengthAdjust="spacingAndGlyphs">Φ1 8bit</text>
<text x="484.3" y="215.8" font-family="Liberation Sans" font-weight="bold" font-size="10" fill="#ecc224" textLength="28.7" lengthAdjust="spacingAndGlyphs">Φ1 8bit</text>
<text x="38.3" y="128.5" font-family="Liberation Sans" font-size="7.5" fill="#16a67c" textLength="6.5" lengthAdjust="spacingAndGlyphs">01</text>
<text x="38.3" y="156" font-family="Liberation Sans" font-size="7.5" fill="#16a67c" textLength="6.5" lengthAdjust="spacingAndGlyphs">02</text>
<text x="38.3" y="164.5" font-family="Liberation Sans" font-size="7.5" fill="#16a67c" textLength="6.5" lengthAdjust="spacingAndGlyphs">04</text>
<text x="38.3" y="192" font-family="Liberation Sans" font-size="7.5" fill="#16a67c" textLength="6.5" lengthAdjust="spacingAndGlyphs">03</text>
<text x="38.3" y="219.0" font-family="Liberation Sans" font-size="7.5" fill="#16a67c" textLength="6.5" lengthAdjust="spacingAndGlyphs">09</text>
<text x="38.3" y="246.5" font-family="Liberation Sans" font-size="7.5" fill="#16a67c" textLength="6.5" lengthAdjust="spacingAndGlyphs">08</text>
<text x="38.3" y="255.0" font-family="Liberation Sans" font-size="7.5" fill="#16a67c" textLength="6.5" lengthAdjust="spacingAndGlyphs">06</text>
<text x="38.3" y="282.5" font-family="Liberation Sans" font-size="7.5" fill="#16a67c" textLength="6.5" lengthAdjust="spacingAndGlyphs">07</text>
<text x="38.3" y="310.0" font-family="Liberation Sans" font-size="7.5" fill="#16a67c" textLength="6.5" lengthAdjust="spacingAndGlyphs">11</text>
<text x="38.3" y="337.5" font-family="Liberation Sans" font-size="7.5" fill="#16a67c" textLength="6.5" lengthAdjust="spacingAndGlyphs">12</text>
<text x="38.3" y="346.0" font-family="Liberation Sans" font-size="7.5" fill="#16a67c" textLength="6.5" lengthAdjust="spacingAndGlyphs">14</text>
<text x="38.3" y="373.5" font-family="Liberation Sans" font-size="7.5" fill="#16a67c" textLength="6.5" lengthAdjust="spacingAndGlyphs">13</text>
<text x="38.3" y="398.0" font-family="Liberation Sans" font-size="7.5" fill="#16a67c" textLength="6.5" lengthAdjust="spacingAndGlyphs">24</text>
<text x="38.3" y="425.5" font-family="Liberation Sans" font-size="7.5" fill="#16a67c" textLength="6.5" lengthAdjust="spacingAndGlyphs">23</text>
<text x="38.3" y="434.0" font-family="Liberation Sans" font-size="7.5" fill="#16a67c" textLength="6.5" lengthAdjust="spacingAndGlyphs">21</text>
<text x="38.3" y="461.5" font-family="Liberation Sans" font-size="7.5" fill="#16a67c" textLength="6.5" lengthAdjust="spacingAndGlyphs">22</text>
<text x="379.5" y="133.5" font-family="Liberation Sans" font-size="7.5" fill="#16a67c" textLength="6.5" lengthAdjust="spacingAndGlyphs">01</text>
<text x="379.5" y="160.5" font-family="Liberation Sans" font-size="7.5" fill="#16a67c" textLength="6.5" lengthAdjust="spacingAndGlyphs">02</text>
<text x="379.5" y="170" font-family="Liberation Sans" font-size="7.5" fill="#16a67c" textLength="6.5" lengthAdjust="spacingAndGlyphs">04</text>
<text x="379.5" y="197" font-family="Liberation Sans" font-size="7.5" fill="#16a67c" textLength="6.5" lengthAdjust="spacingAndGlyphs">03</text>
<text x="379.5" y="224.0" font-family="Liberation Sans" font-size="7.5" fill="#16a67c" textLength="6.5" lengthAdjust="spacingAndGlyphs">09</text>
<text x="379.5" y="251.0" font-family="Liberation Sans" font-size="7.5" fill="#16a67c" textLength="6.5" lengthAdjust="spacingAndGlyphs">08</text>
<text x="379.5" y="260.5" font-family="Liberation Sans" font-size="7.5" fill="#16a67c" textLength="6.5" lengthAdjust="spacingAndGlyphs">06</text>
<text x="379.5" y="287.5" font-family="Liberation Sans" font-size="7.5" fill="#16a67c" textLength="6.5" lengthAdjust="spacingAndGlyphs">07</text>
<text x="379.5" y="316.0" font-family="Liberation Sans" font-size="7.5" fill="#16a67c" textLength="6.5" lengthAdjust="spacingAndGlyphs">11</text>
<text x="379.5" y="343.0" font-family="Liberation Sans" font-size="7.5" fill="#16a67c" textLength="6.5" lengthAdjust="spacingAndGlyphs">12</text>
<text x="379.5" y="352.5" font-family="Liberation Sans" font-size="7.5" fill="#16a67c" textLength="6.5" lengthAdjust="spacingAndGlyphs">14</text>
<text x="379.5" y="379.5" font-family="Liberation Sans" font-size="7.5" fill="#16a67c" textLength="6.5" lengthAdjust="spacingAndGlyphs">13</text>
<text x="379.5" y="403.0" font-family="Liberation Sans" font-size="7.5" fill="#16a67c" textLength="6.5" lengthAdjust="spacingAndGlyphs">24</text>
<text x="379.5" y="430.0" font-family="Liberation Sans" font-size="7.5" fill="#16a67c" textLength="6.5" lengthAdjust="spacingAndGlyphs">23</text>
<text x="379.5" y="439.5" font-family="Liberation Sans" font-size="7.5" fill="#16a67c" textLength="6.5" lengthAdjust="spacingAndGlyphs">21</text>
<text x="379.5" y="466.5" font-family="Liberation Sans" font-size="7.5" fill="#16a67c" textLength="6.5" lengthAdjust="spacingAndGlyphs">22</text>
<text x="316.5" y="129.5" font-family="Liberation Sans" font-size="7.5" fill="#16a67c" textLength="6.5" lengthAdjust="spacingAndGlyphs">15</text>
<text x="316.5" y="156.5" font-family="Liberation Sans" font-size="7.5" fill="#16a67c" textLength="6.5" lengthAdjust="spacingAndGlyphs">16</text>
<text x="316.5" y="167" font-family="Liberation Sans" font-size="7.5" fill="#16a67c" textLength="6.5" lengthAdjust="spacingAndGlyphs">17</text>
<text x="316.5" y="195" font-family="Liberation Sans" font-size="7.5" fill="#16a67c" textLength="6.5" lengthAdjust="spacingAndGlyphs">18</text>
<text x="316.5" y="375" font-family="Liberation Sans" font-size="7.5" fill="#16a67c" textLength="6.5" lengthAdjust="spacingAndGlyphs">39</text>
<text x="316.5" y="391" font-family="Liberation Sans" font-size="7.5" fill="#16a67c" textLength="6.5" lengthAdjust="spacingAndGlyphs">40</text>
<text x="316.5" y="434" font-family="Liberation Sans" font-size="7.5" fill="#16a67c" textLength="6.5" lengthAdjust="spacingAndGlyphs">19</text>
<text x="316.5" y="462" font-family="Liberation Sans" font-size="7.5" fill="#16a67c" textLength="6.5" lengthAdjust="spacingAndGlyphs">20</text>
<text x="658" y="134" font-family="Liberation Sans" font-size="7.5" fill="#16a67c" textLength="6.5" lengthAdjust="spacingAndGlyphs">15</text>
<text x="658" y="162" font-family="Liberation Sans" font-size="7.5" fill="#16a67c" textLength="6.5" lengthAdjust="spacingAndGlyphs">16</text>
<text x="658" y="174" font-family="Liberation Sans" font-size="7.5" fill="#16a67c" textLength="6.5" lengthAdjust="spacingAndGlyphs">17</text>
<text x="658" y="202" font-family="Liberation Sans" font-size="7.5" fill="#16a67c" textLength="6.5" lengthAdjust="spacingAndGlyphs">18</text>
<text x="658" y="380" font-family="Liberation Sans" font-size="7.5" fill="#16a67c" textLength="6.5" lengthAdjust="spacingAndGlyphs">39</text>
<text x="658" y="396" font-family="Liberation Sans" font-size="7.5" fill="#16a67c" textLength="6.5" lengthAdjust="spacingAndGlyphs">40</text>
<text x="658" y="437" font-family="Liberation Sans" font-size="7.5" fill="#16a67c" textLength="6.5" lengthAdjust="spacingAndGlyphs">19</text>
<text x="658" y="466" font-family="Liberation Sans" font-size="7.5" fill="#16a67c" textLength="6.5" lengthAdjust="spacingAndGlyphs">20</text></svg>
</body></html>
